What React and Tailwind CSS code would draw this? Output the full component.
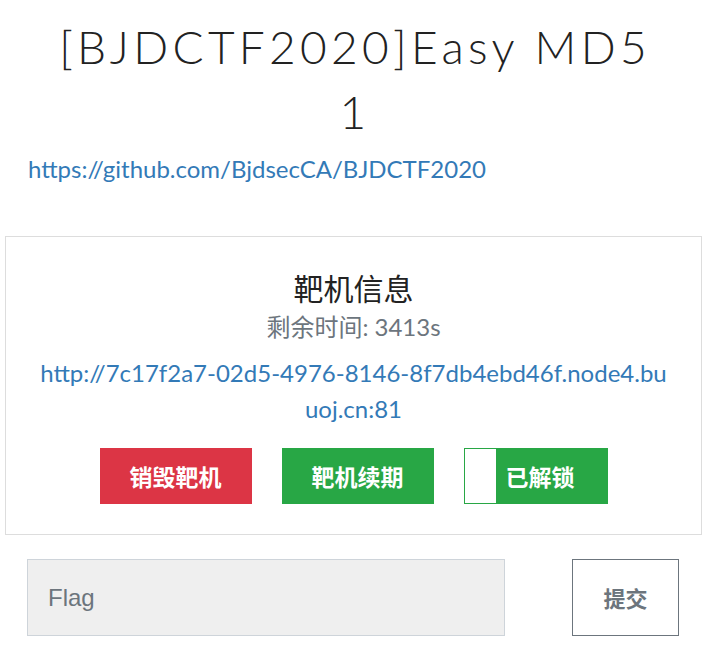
import React from 'react';

const App = () => {
    return (
        <div className="w-[724px] min-h-[652px] bg-white font-['Lato','Noto_Sans_CJK_SC',sans-serif]">
            {/* Title */}
            <h1 className="w-[610px] ml-[50px] pt-[14px] text-center text-[46px] leading-[65px] font-light tracking-[4.3px] text-[#222]">
                [BJDCTF2020]Easy MD5 1
            </h1>
            <div className="px-[28px] pt-[11px]">
                <a href="#" className="text-[24px] leading-[28px] text-[#337ab7]">
                    https://github.com/BjdsecCA/BJDCTF2020
                </a>
            </div>

            {/* Target info card */}
            <div className="mx-[5px] mt-[52px] w-[697px] border border-[#dddddd] px-[33px] pt-[30px] pb-[30px] text-center">
                <h3 className="text-[30px] leading-[40px] text-[#222] font-['Noto_Sans_CJK_SC',sans-serif]">靶机信息</h3>
                <p className="mt-[4px] text-[24px] leading-[32px] text-[#6c757d]">剩余时间: 3413s</p>
                <a href="#" className="block mt-[12px] text-[24px] leading-[36px] text-[#337ab7] break-all">
                    http://7c17f2a7-02d5-4976-8146-8f7db4ebd46f.node4.buuoj.cn:81
                </a>
                <div className="mt-[21px] flex justify-center gap-[30px]">
                    <button className="w-[152px] h-[56px] bg-[#dc3545] text-white text-[23px] font-bold font-['Noto_Sans_CJK_SC',sans-serif]">
                        销毁靶机
                    </button>
                    <button className="w-[152px] h-[56px] bg-[#28a745] text-white text-[23px] font-bold font-['Noto_Sans_CJK_SC',sans-serif]">
                        靶机续期
                    </button>
                    <button className="w-[144px] h-[56px] flex border border-[#28a745] bg-[#28a745]">
                        <span className="w-[31px] h-full bg-white"></span>
                        <span className="flex-1 h-full flex items-center justify-start pl-[10px] text-white text-[23px] font-bold font-['Noto_Sans_CJK_SC',sans-serif]">
                            已解锁
                        </span>
                    </button>
                </div>
            </div>

            {/* Flag submit */}
            <div className="flex items-start mt-[24px] px-[27px] gap-[67px]">
                <input
                    type="text"
                    placeholder="Flag"
                    className="w-[478px] h-[77px] bg-[#efefef] border border-[#ced4da] px-[20px] text-[24px] font-['Liberation_Sans',sans-serif] placeholder:text-[#6c757d] outline-none"
                />
                <button className="w-[107px] h-[77px] border border-[#6c757d] text-[#6c757d] text-[22px] font-bold font-['Noto_Sans_CJK_SC',sans-serif]">
                    提交
                </button>
            </div>
        </div>
    );
};

export default App;
